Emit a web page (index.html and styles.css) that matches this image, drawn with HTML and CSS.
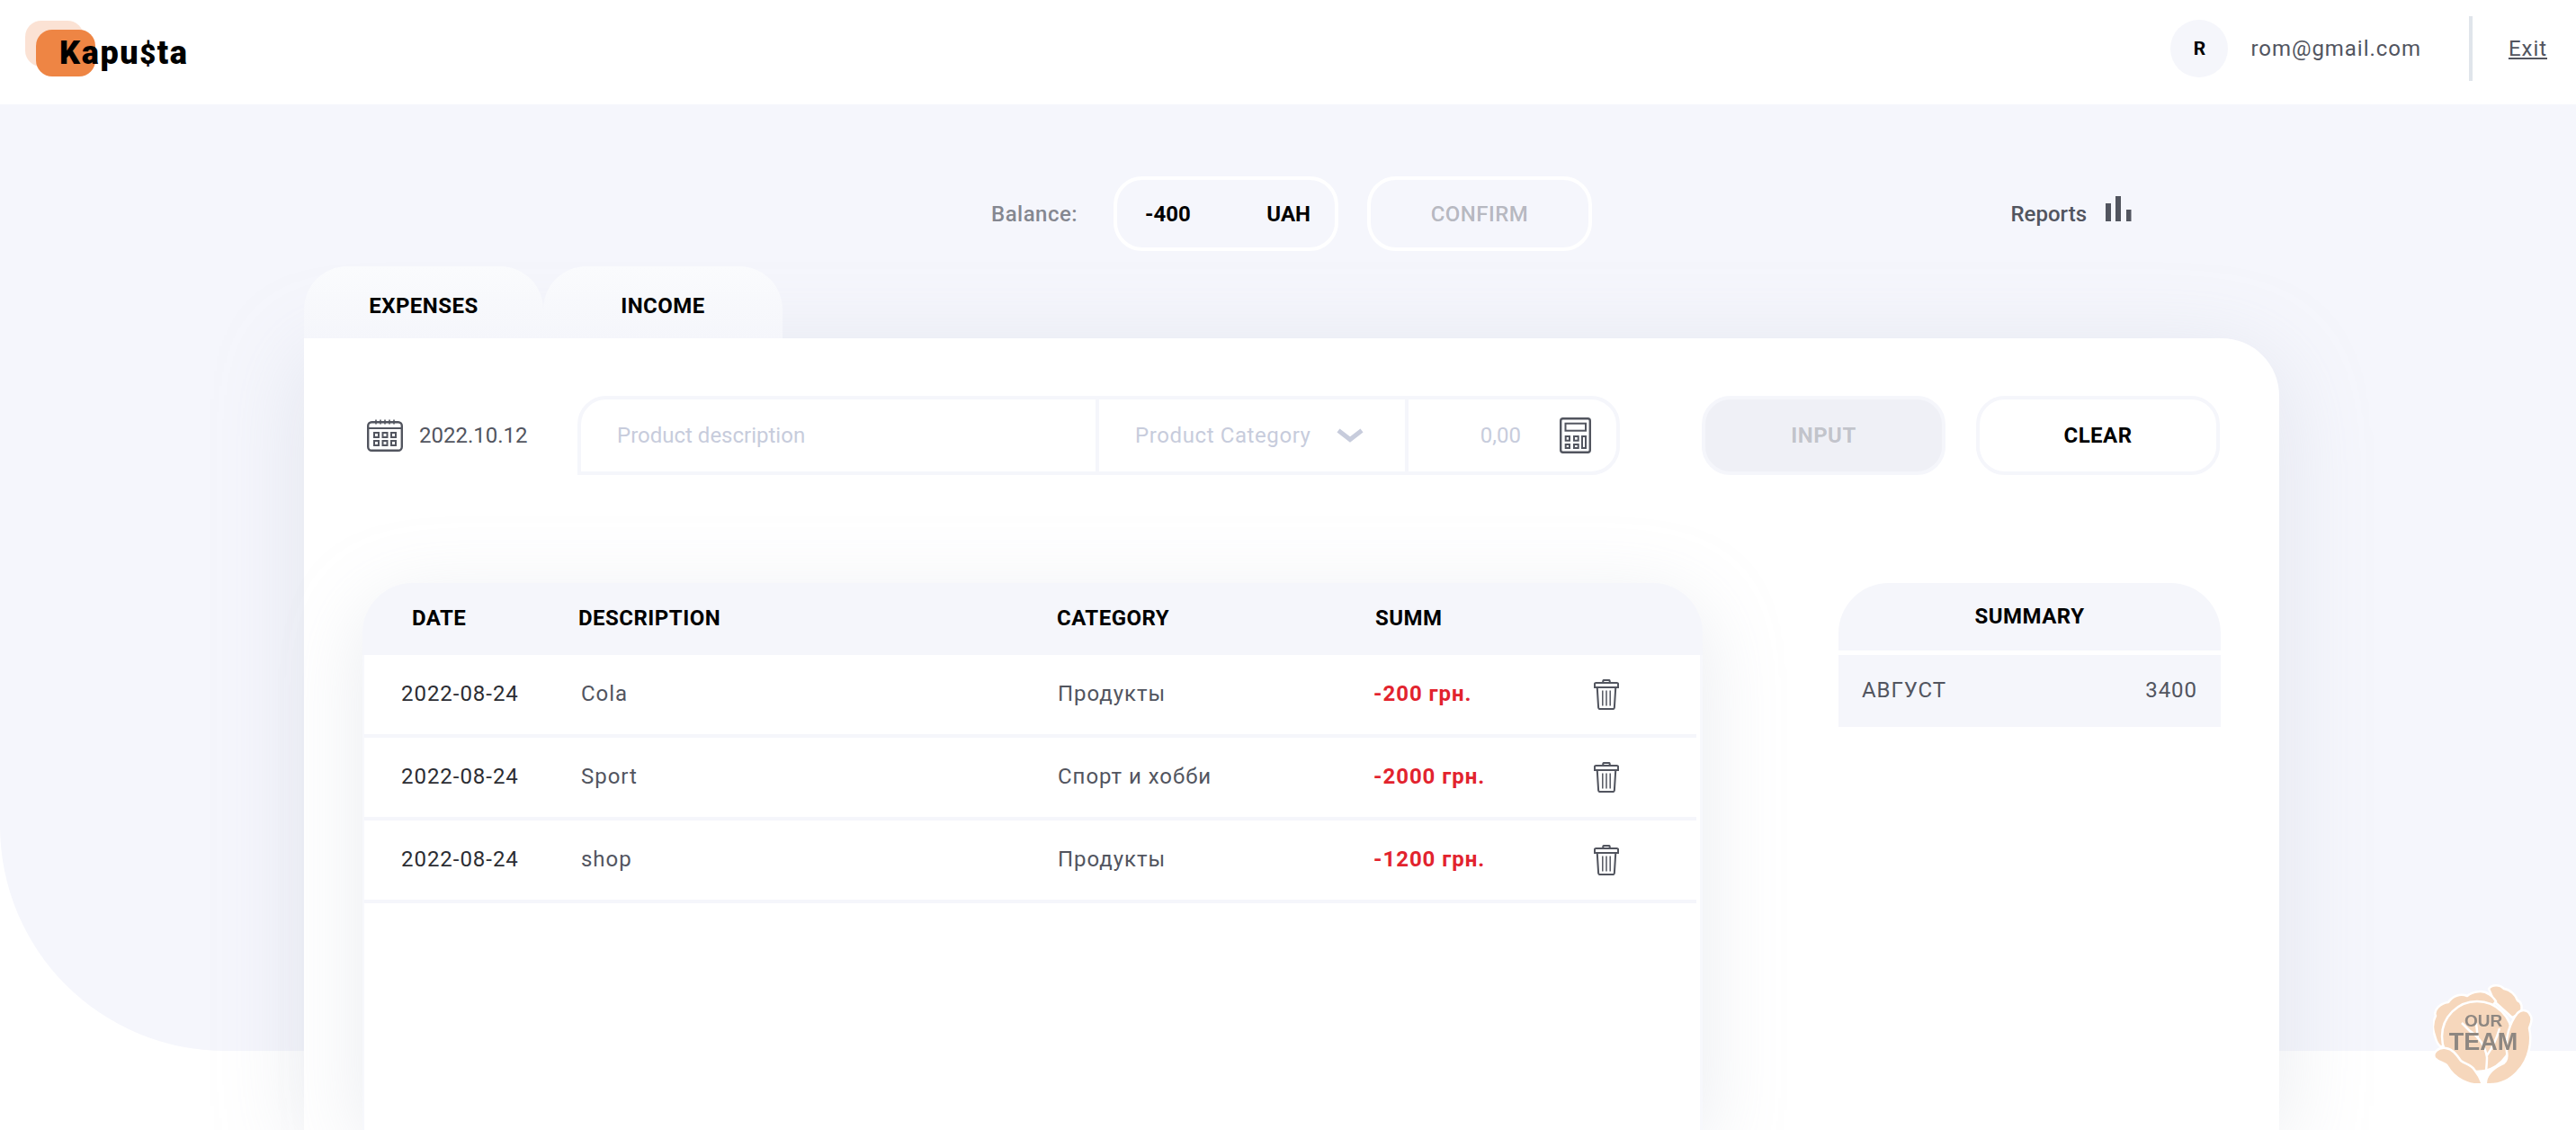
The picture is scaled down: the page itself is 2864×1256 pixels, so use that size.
FILE: index.html
```html
<!DOCTYPE html>
<html lang="en">
<head>
    <meta charset="UTF-8">
    <meta name="viewport" content="width=device-width, initial-scale=1.0">
    <title>Kapusta</title>
    <link rel="stylesheet" href="styles.css">
</head>
<body>
    <header class="header">
        <a class="logo" href="#">
            <span class="logo-back"></span>
            <span class="logo-front"></span>
            <span class="logo-text">Kapu<span class="logo-dollar">$</span>ta</span>
        </a>
        <div class="user">
            <span class="avatar">R</span>
            <span class="email">rom@gmail.com</span>
            <span class="user-line"></span>
            <a class="exit" href="#">Exit</a>
        </div>
    </header>

    <main class="hero">
        <div class="wrap">
            <div class="balance">
                <span class="balance-label">Balance:</span>
                <div class="balance-box"><span>-400</span><span>UAH</span></div>
                <button class="balance-confirm">CONFIRM</button>
                <a class="reports" href="#">
                    Reports
                    <svg class="reports-icon" width="30" height="28" viewBox="0 0 30 28" fill="#52555f">
                        <rect x="1" y="8" width="6" height="20"/>
                        <rect x="12" y="0" width="6" height="28"/>
                        <rect x="24" y="15" width="5.5" height="13"/>
                    </svg>
                </a>
            </div>

            <div class="tabs">
                <a class="tab" href="#">EXPENSES</a>
                <a class="tab" href="#">INCOME</a>
            </div>

            <section class="card">
                <form class="entry">
                    <div class="date">
                        <svg width="40" height="36" viewBox="0 0 40 36" fill="none" stroke="#52555f">
                            <rect x="1.2" y="3.2" width="37.6" height="31.6" rx="4" stroke-width="2.4"/>
                            <path d="M1.5 10h37" stroke-width="2"/>
                            <path d="M10 0.5v5M15 0.5v5M20 0.5v5M25 0.5v5M30 0.5v5" stroke-width="1.6"/>
                            <g stroke-width="2">
                                <rect x="8" y="15" width="5" height="5"/>
                                <rect x="17.5" y="15" width="5" height="5"/>
                                <rect x="27" y="15" width="5" height="5"/>
                                <rect x="8" y="24" width="5" height="5"/>
                                <rect x="17.5" y="24" width="5" height="5"/>
                                <rect x="27" y="24" width="5" height="5"/>
                            </g>
                        </svg>
                        <span>2022.10.12</span>
                    </div>
                    <div class="fields">
                        <div class="field field-desc">Product description</div>
                        <div class="field field-cat">
                            Product Category
                            <svg width="30" height="16" viewBox="0 0 30 16" fill="none" stroke="#c7ccdc" stroke-width="5">
                                <path d="M2 2.5l13 10 13-10"/>
                            </svg>
                        </div>
                        <div class="field field-sum">
                            <span>0,00</span>
                            <svg width="35" height="40" viewBox="0 0 35 40" fill="none" stroke="#52555f">
                                <rect x="1.2" y="1.2" width="32.6" height="37.6" rx="2.5" stroke-width="2.4"/>
                                <g stroke-width="2">
                                    <rect x="6.5" y="6.7" width="22.5" height="8"/>
                                    <rect x="6.7" y="21" width="4.3" height="4.7"/>
                                    <rect x="16" y="21" width="4.7" height="4.7"/>
                                    <rect x="6.7" y="30" width="4.3" height="4"/>
                                    <rect x="16" y="30" width="4.7" height="4"/>
                                    <rect x="25" y="21" width="4" height="13"/>
                                </g>
                            </svg>
                        </div>
                    </div>
                    <button class="btn btn-input" type="button">INPUT</button>
                    <button class="btn btn-clear" type="button">CLEAR</button>
                </form>

                <div class="content">
                    <div class="table">
                        <div class="table-head">
                            <span>DATE</span>
                            <span>DESCRIPTION</span>
                            <span>CATEGORY</span>
                            <span>SUMM</span>
                        </div>
                        <div class="table-body">
                            <div class="row">
                                <span class="row-date">2022-08-24</span>
                                <span>Cola</span>
                                <span>Продукты</span>
                                <span class="row-sum">-200 грн.</span>
                                <svg class="trash" width="28" height="34" viewBox="0 0 30 34" preserveAspectRatio="none" fill="none" stroke="#52555f" stroke-width="2.2">
                                    <path d="M11 4V2.2c0-.7.5-1.2 1.2-1.2h5.6c.7 0 1.2.5 1.2 1.2V4"/>
                                    <path d="M2.5 4h25c.8 0 1.5.7 1.5 1.5V9H1V5.5C1 4.7 1.7 4 2.5 4z"/>
                                    <path d="M4 9l1.5 22.5c.1 1 .9 1.5 1.8 1.5h15.4c.9 0 1.7-.5 1.8-1.5L26 9"/>
                                    <path d="M10.5 12.5v17M15 12.5v17M19.5 12.5v17" stroke-width="1.6"/>
                                </svg>
                            </div>
                            <div class="row">
                                <span class="row-date">2022-08-24</span>
                                <span>Sport</span>
                                <span>Спорт и хобби</span>
                                <span class="row-sum">-2000 грн.</span>
                                <svg class="trash" width="28" height="34" viewBox="0 0 30 34" preserveAspectRatio="none" fill="none" stroke="#52555f" stroke-width="2.2">
                                    <path d="M11 4V2.2c0-.7.5-1.2 1.2-1.2h5.6c.7 0 1.2.5 1.2 1.2V4"/>
                                    <path d="M2.5 4h25c.8 0 1.5.7 1.5 1.5V9H1V5.5C1 4.7 1.7 4 2.5 4z"/>
                                    <path d="M4 9l1.5 22.5c.1 1 .9 1.5 1.8 1.5h15.4c.9 0 1.7-.5 1.8-1.5L26 9"/>
                                    <path d="M10.5 12.5v17M15 12.5v17M19.5 12.5v17" stroke-width="1.6"/>
                                </svg>
                            </div>
                            <div class="row">
                                <span class="row-date">2022-08-24</span>
                                <span>shop</span>
                                <span>Продукты</span>
                                <span class="row-sum">-1200 грн.</span>
                                <svg class="trash" width="28" height="34" viewBox="0 0 30 34" preserveAspectRatio="none" fill="none" stroke="#52555f" stroke-width="2.2">
                                    <path d="M11 4V2.2c0-.7.5-1.2 1.2-1.2h5.6c.7 0 1.2.5 1.2 1.2V4"/>
                                    <path d="M2.5 4h25c.8 0 1.5.7 1.5 1.5V9H1V5.5C1 4.7 1.7 4 2.5 4z"/>
                                    <path d="M4 9l1.5 22.5c.1 1 .9 1.5 1.8 1.5h15.4c.9 0 1.7-.5 1.8-1.5L26 9"/>
                                    <path d="M10.5 12.5v17M15 12.5v17M19.5 12.5v17" stroke-width="1.6"/>
                                </svg>
                            </div>
                        </div>
                    </div>

                    <aside class="summary">
                        <div class="summary-head">SUMMARY</div>
                        <div class="summary-row"><span>АВГУСТ</span><span>3400</span></div>
                    </aside>
                </div>
            </section>
        </div>
    </main>

    <a class="team" href="#">
        <svg class="team-icon" width="112" height="113" viewBox="0 0 112 113" fill="#f6d7bc" stroke="#fff" stroke-width="2.5" stroke-linejoin="round">
            <path d="M62 6C66 1 74 1 79 6C86 7 92 13 94 19C99 21 100 28 97 33L88 38L68 20Z"/>
            <path d="M1 55C-1 48 1 40 3 36C0 30 8 22 17 21C22 14 30 11 38 14C44 9 56 7 62 12C66 14 68 17 70 20L30 70L8 70C3 66 3 60 1 55Z"/>
            <circle cx="49" cy="59" r="39"/>
            <path d="M108 35C112 40 108 46 107 50C110 62 108 84 94 98C85 108 72 113 59 112C58 104 65 95 76 90C82 88 83 82 82 76C80 62 85 44 94 33C99 28 106 30 108 35Z"/>
            <path d="M2 83C-1 77 6 71 14 72C22 73 26 79 31 86C36 90 42 90 46 96C50 101 53 106 55 112C40 114 24 106 16 92C14 88 6 88 2 83Z"/>
            <path d="M58 112C58 104 60 92 60 82M60 82C58 70 52 60 40 52M60 80C66 72 70 64 74 50M44 56L32 44M50 62L48 44" fill="none"/>
        </svg>
        <span class="team-our">OUR</span>
        <span class="team-name">TEAM</span>
    </a>
</body>
</html>
```

FILE: styles.css
```css
* {
    box-sizing: border-box;
}

html, body {
    height: 100%;
}

body {
    margin: 0;
    overflow: hidden;
    background-color: #fff;
    font-family: Roboto, sans-serif;
    font-size: 24px;
    color: #52555f;
}

a {
    color: inherit;
    text-decoration: none;
}

button {
    font-family: inherit;
}

/* header */
.header {
    display: flex;
    justify-content: space-between;
    align-items: center;
    height: 116px;
    padding: 0 32px 8px 28px;
    background-color: #fff;
}

.logo {
    position: relative;
    display: block;
    width: 180px;
    height: 62px;
}

.logo-back {
    position: absolute;
    left: 0;
    top: 0;
    width: 65px;
    height: 51px;
    border-radius: 18px;
    background-color: #fbe2d4;
}

.logo-front {
    position: absolute;
    left: 12px;
    top: 10px;
    width: 66px;
    height: 52px;
    border-radius: 18px;
    background-color: #ee8544;
}

.logo-text {
    position: absolute;
    left: 38px;
    top: 15px;
    font-size: 36px;
    font-weight: 900;
    line-height: 42px;
    color: #000;
    letter-spacing: 0.045em;
}

.logo-dollar {
    font-size: 31px;
}

.user {
    display: flex;
    align-items: center;
}

.avatar {
    display: flex;
    justify-content: center;
    align-items: center;
    width: 64px;
    height: 64px;
    border-radius: 50%;
    background-color: #f5f6fb;
    font-size: 21px;
    font-weight: 700;
    color: #000;
}

.email {
    margin-left: 25px;
    letter-spacing: 0.04em;
}

.user-line {
    width: 4px;
    height: 72px;
    margin: 0 40px 0 53px;
    background-color: #e0e5eb;
}

.exit {
    text-decoration: underline;
    letter-spacing: 0.04em;
}

/* hero */
.hero {
    height: 1052px;
    background-color: #f5f6fc;
    border-bottom-left-radius: 250px;
}

.wrap {
    width: 2196px;
    margin-left: 338px;
    padding-top: 80px;
}

.balance {
    display: flex;
    align-items: center;
    height: 83px;
    padding: 0 164px 0 764px;
    font-weight: 500;
}

.balance-label {
    width: 136px;
    color: rgba(82, 85, 95, 0.7);
    letter-spacing: 0.02em;
}

.balance-box {
    display: flex;
    justify-content: space-between;
    align-items: center;
    width: 250px;
    height: 83px;
    padding: 0 27px 0 31px;
    border: 4px solid #fff;
    border-radius: 32px;
    font-weight: 700;
    color: #000;
}

.balance-confirm {
    width: 250px;
    height: 83px;
    margin-left: 32px;
    border: 4px solid #fff;
    border-radius: 32px;
    background: none;
    font-size: 24px;
    font-weight: 500;
    color: rgba(82, 85, 95, 0.4);
    letter-spacing: 0.02em;
}

.reports {
    display: flex;
    align-items: center;
    gap: 20px;
    margin-left: auto;
    font-weight: 500;
}

.reports-icon {
    margin-bottom: 11px;
}

.tabs {
    display: flex;
    margin-top: 17px;
}

.tab {
    width: 266px;
    height: 80px;
    padding-top: 30px;
    border-radius: 48px 48px 0 0;
    background: linear-gradient(180deg, #fafbfd 0%, #f5f6fb 100%);
    font-weight: 700;
    line-height: 28px;
    text-align: center;
    color: #000;
    letter-spacing: 0.02em;
}

/* card */
.card {
    height: 880px;
    padding-top: 64px;
    background-color: #fff;
    border-radius: 0 64px 0 0;
    box-shadow: 0 20px 100px rgba(170, 178, 197, 0.25);
}

.entry {
    display: flex;
    align-items: center;
    padding-left: 70px;
}

.date {
    display: flex;
    align-items: center;
    gap: 18px;
    width: 234px;
}

.fields {
    display: flex;
    width: 1159px;
    height: 88px;
    border: 4px solid #f5f6fb;
    border-radius: 32px 32px 32px 0;
    color: #c7ccdc;
}

.field {
    display: flex;
    align-items: center;
}

.field-desc {
    width: 576px;
    padding-left: 40px;
    border-right: 4px solid #f5f6fb;
}

.field-cat {
    width: 344px;
    padding-left: 40px;
    gap: 28px;
    border-right: 4px solid #f5f6fb;
    letter-spacing: 0.6px;
}

.field-sum {
    flex: 1;
    justify-content: flex-end;
    gap: 43px;
    padding-right: 28px;
}

.btn {
    width: 271px;
    height: 88px;
    border: 4px solid #f5f6fb;
    border-radius: 32px;
    font-size: 24px;
    font-weight: 700;
    letter-spacing: 0.02em;
}

.btn-input {
    margin-left: 91px;
    background-color: #eff0f6;
    color: rgba(82, 85, 95, 0.3);
}

.btn-clear {
    margin-left: 34px;
    background-color: #fff;
    color: #000;
}

.content {
    display: flex;
    align-items: flex-start;
    margin-top: 120px;
    padding-left: 65px;
}

/* table */
.table {
    width: 1490px;
    border-radius: 56px 56px 0 0;
    background-color: #f7f8fc;
    box-shadow: 0 20px 90px rgba(170, 178, 197, 0.25);
}

.table-head {
    display: grid;
    grid-template-columns: 185px 532px 354px 1fr;
    align-items: center;
    height: 80px;
    padding: 0 0 2px 55px;
    border-radius: 56px 56px 0 0;
    background-color: #f5f6fb;
    font-weight: 700;
    color: #000;
    letter-spacing: 0.02em;
}

.table-body {
    height: 528px;
    margin: 0 3px 0 2px;
    padding-right: 4px;
    background-color: #fff;
}

.row {
    display: grid;
    grid-template-columns: 200px 530px 351px 245px 1fr;
    align-items: center;
    height: 92px;
    padding: 0 0 2px 41px;
    border-bottom: 4px solid #f5f6fb;
    letter-spacing: 0.04em;
}

.row-date {
    color: #2c2d33;
}

.row-sum {
    font-weight: 700;
    color: #e2232e;
}

.trash {
    margin-top: 2px;
}

/* summary */
.summary {
    width: 425px;
    margin-left: 151px;
    color: #52555f;
    letter-spacing: 0.04em;
}

.summary-head {
    height: 75px;
    padding-top: 23px;
    border-radius: 56px 56px 0 0;
    background-color: #f5f6fb;
    font-weight: 700;
    line-height: 28px;
    text-align: center;
    color: #000;
    letter-spacing: 0.02em;
}

.summary-row {
    display: flex;
    justify-content: space-between;
    align-items: center;
    height: 80px;
    margin-top: 5px;
    padding: 0 26px 2px 26px;
    background-color: #f5f6fb;
}

/* floating badge */
.team {
    position: fixed;
    left: 2705px;
    top: 1093px;
    display: flex;
    flex-direction: column;
    align-items: center;
    width: 112px;
    height: 113px;
    padding-top: 32px;
    font-family: "Liberation Sans", Arial, sans-serif;
    font-weight: 700;
    color: #8e8781;
}

.team-icon {
    position: absolute;
    left: 0;
    top: 0;
}

.team-our {
    position: relative;
    font-size: 19px;
    line-height: 20px;
}

.team-name {
    position: relative;
    font-size: 27px;
    line-height: 26px;
}
```
